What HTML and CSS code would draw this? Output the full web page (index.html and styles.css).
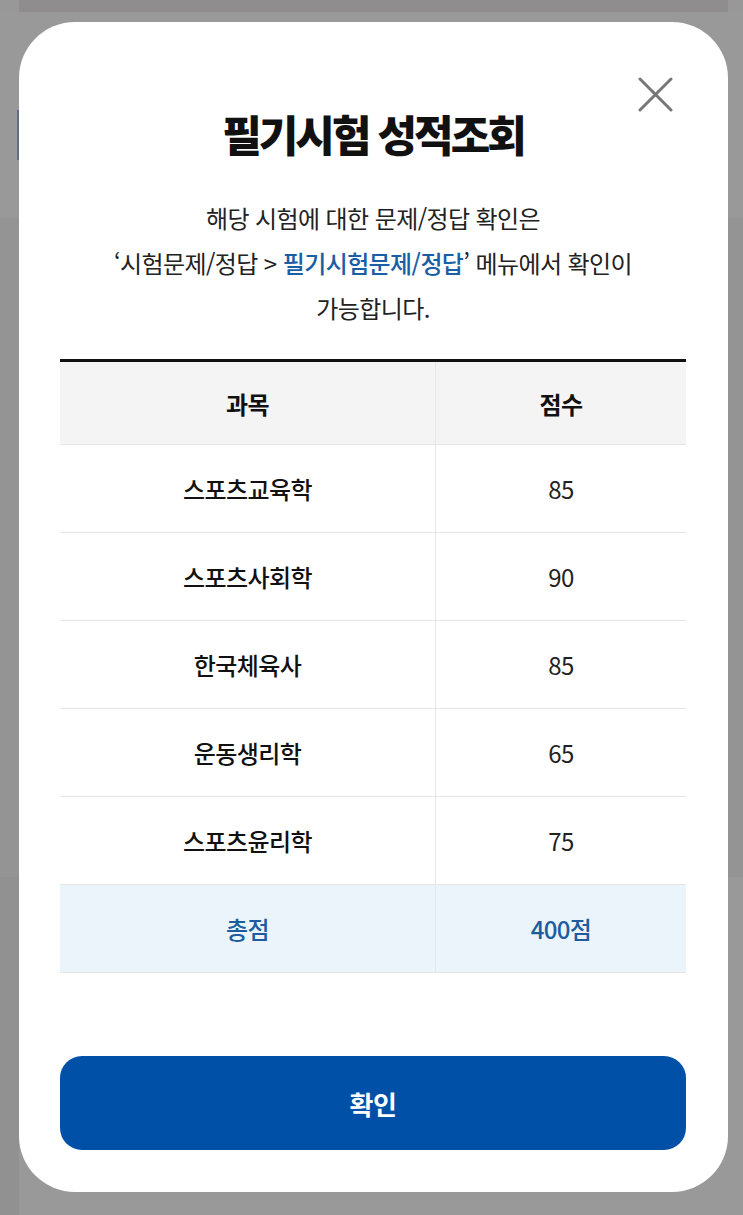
FILE: index.html
```html
<!DOCTYPE html>
<html lang="ko">
<head>
<meta charset="utf-8">
<title>필기시험 성적조회</title>
<link rel="stylesheet" href="styles.css">
</head>
<body>
<div class="page">
  <div class="page-top"></div>
  <div class="page-band1"><div class="page-mark"></div></div>
  <div class="page-band2"></div>
  <div class="page-band3"></div>
</div>

<div class="overlay">
  <div class="modal" role="dialog" aria-label="필기시험 성적조회">
    <button class="close" aria-label="닫기">
      <svg width="35" height="35" viewBox="0 0 35 35" aria-hidden="true">
        <path d="M2 2 L33 33 M33 2 L2 33" stroke="#777" stroke-width="3" stroke-linecap="round" fill="none"/>
      </svg>
    </button>
    <h1 class="title">필기시험 성적조회</h1>
    <p class="desc">해당 시험에 대한 문제/정답 확인은<br>‘시험문제/정답 &gt; <span class="hl">필기시험문제/정답</span>’ 메뉴에서 확인이<br>가능합니다.</p>
    <div class="table">
      <div class="row head"><div class="cell">과목</div><div class="cell">점수</div></div>
      <div class="row"><div class="cell subj">스포츠교육학</div><div class="cell">85</div></div>
      <div class="row"><div class="cell subj">스포츠사회학</div><div class="cell">90</div></div>
      <div class="row"><div class="cell subj">한국체육사</div><div class="cell">85</div></div>
      <div class="row"><div class="cell subj">운동생리학</div><div class="cell">65</div></div>
      <div class="row"><div class="cell subj">스포츠윤리학</div><div class="cell">75</div></div>
      <div class="row total"><div class="cell">총점</div><div class="cell">400점</div></div>
    </div>
    <button class="confirm">확인</button>
  </div>
</div>
</body>
</html>
```
FILE: styles.css
```css
* { box-sizing: border-box; }
html, body { margin: 0; padding: 0; }
body {
  width: 743px;
  height: 1215px;
  overflow: hidden;
  background: #989898;
  font-family: "Noto Sans CJK KR", "Noto Sans", sans-serif;
  position: relative;
}
.page { display: flex; flex-direction: column; height: 1215px; }
.page-top { height: 12px; margin: 0 15px 0 19px; background: #8f8d8d; }
.page-band1 { height: 206px; background: #999999; padding-top: 98px; }
.page-mark { width: 2px; height: 50px; margin-left: 17px; background: #5d6f86; }
.page-band2 { height: 659px; background: #949494; }
.page-band3 { flex: 1; background: #999999; border-left: 19px solid #919191; }

.overlay {
  position: absolute;
  inset: 0;
  padding: 22px 15px 23px 19px;
  display: flex;
}
.modal {
  position: relative;
  width: 709px;
  height: 1170px;
  background: #fff;
  border-radius: 56px;
  padding: 86px 42px 42px 41px;
  display: flex;
  flex-direction: column;
}
.close {
  position: absolute;
  top: 55px;
  right: 55px;
  width: 35px;
  height: 35px;
  padding: 0;
  border: 0;
  background: none;
  display: flex;
}
.title {
  margin: 0;
  font-size: 43px;
  line-height: 50px;
  font-weight: 900;
  letter-spacing: -3px;
  text-align: center;
  color: #111;
}
.desc {
  margin: 37px 0 0;
  font-size: 24px;
  line-height: 45px;
  letter-spacing: -0.6px;
  text-align: center;
  color: #222;
}
.hl { color: #1a5ea6; font-weight: 500; }

.table {
  margin-top: 29px;
  border-top: 3px solid #111;
}
.row {
  display: grid;
  grid-template-columns: 376px 1fr;
  height: 88px;
  border-bottom: 1px solid #e6e6e6;
}
.cell {
  display: flex;
  align-items: center;
  justify-content: center;
  font-size: 24px;
  letter-spacing: -0.6px;
  color: #222;
}
.cell:first-child { border-right: 1px solid #e6e6e6; }
.head { height: 83px; background: #f4f4f4; }
.head .cell { font-weight: 700; color: #111; }
.subj { font-weight: 500; color: #111; }
.total { background: #ebf4fb; }
.total .cell { color: #1d5c9f; font-weight: 500; }

.confirm {
  margin-top: 83px;
  height: 94px;
  border: 0;
  border-radius: 22px;
  background: #0050a8;
  color: #fff;
  font-family: inherit;
  font-size: 26px;
  font-weight: 700;
  letter-spacing: -0.5px;
}
```
